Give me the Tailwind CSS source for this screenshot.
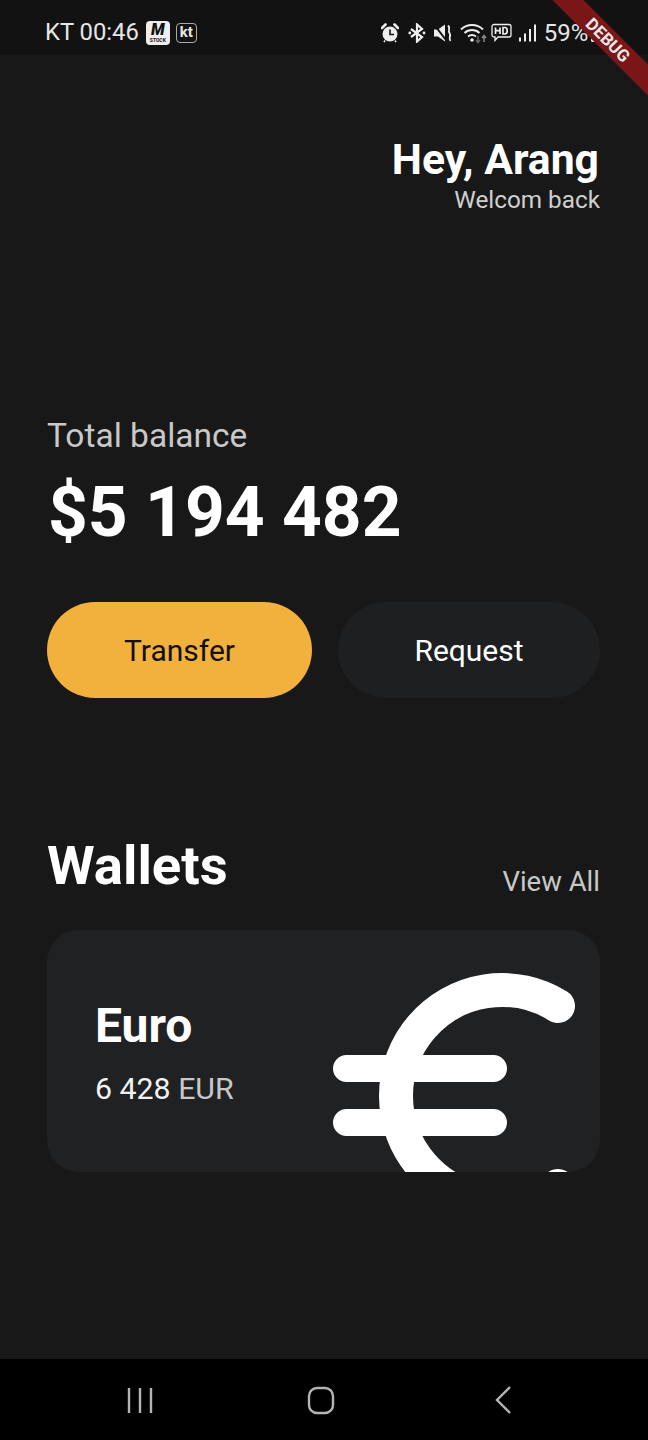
<!DOCTYPE html>
<html lang="en">
  <head>
    <meta charset="UTF-8" />
    <meta name="viewport" content="width=device-width, initial-scale=1.0" />
    <title>Wallet</title>
    <script src="https://cdn.jsdelivr.net/npm/@tailwindcss/browser@4"></script>
  </head>
  <body class="bg-[#181818] font-['Roboto',sans-serif]">
    <div class="relative w-[648px] h-[1440px] overflow-hidden flex flex-col">

      <!-- Status bar -->
      <div class="h-[55px] shrink-0 bg-[#121212] flex items-center pt-[10px] pl-[45px] text-[#e6e6e6]">
        <span class="text-[23.8px] leading-none">KT 00:46</span>
        <div class="ml-[7px] w-[24px] h-[24px] rounded-[4px] bg-[#eeeeee] flex flex-col items-center justify-center text-[#111]">
          <span class="text-[16px] leading-[14px] font-black italic">M</span>
          <span class="text-[5px] leading-[6px] font-bold">STOCK</span>
        </div>
        <div class="ml-[6px] w-[21px] h-[20px] rounded-[4px] border border-[#aaaaaa] flex items-center justify-center">
          <span class="text-[15px] leading-none font-bold">kt</span>
        </div>
        <div class="ml-[184px] flex items-center">
          <!-- alarm -->
          <svg width="18" height="20" viewBox="0 0 18 20">
            <circle cx="9" cy="11" r="7.5" fill="#eee"/>
            <path d="M9 6.5V11.5H13" fill="none" stroke="#121212" stroke-width="1.6"/>
            <path d="M1 5L4.5 1.5M17 5L13.5 1.5" stroke="#eee" stroke-width="2.6" stroke-linecap="round"/>
            <path d="M4 17.5L3 19M14 17.5L15 19" stroke="#eee" stroke-width="1.6"/>
          </svg>
          <!-- bluetooth -->
          <svg class="ml-[9px]" width="18" height="20" viewBox="0 0 18 20">
            <path d="M3 6L14 14L9 18.5V1.5L14 6L3 14" fill="none" stroke="#eee" stroke-width="2.2"/>
            <circle cx="1.8" cy="10" r="1.4" fill="#eee"/>
            <circle cx="16" cy="10" r="1.4" fill="#eee"/>
          </svg>
          <!-- muted speaker -->
          <svg class="ml-[8px]" width="19" height="20" viewBox="0 0 19 20">
            <path d="M0 6.5H4L11 1.5V18.5L4 13.5H0Z" fill="#eee"/>
            <path d="M0.5 2L12 17" stroke="#121212" stroke-width="2"/>
            <path d="M14 2.5C17 5 13.5 7 15.5 10C17.5 13 14 15 16.5 18" fill="none" stroke="#eee" stroke-width="1.8"/>
          </svg>
          <!-- wifi -->
          <svg class="ml-[7px]" width="27" height="22" viewBox="0 0 27 22">
            <path d="M1 7.5C7 1.5 17 1.5 23 7.5M4.5 11C8.5 7 15.5 7 19.5 11M8 14.5C10.5 12.5 13.5 12.5 16 14.5" fill="none" stroke="#eee" stroke-width="1.9"/>
            <circle cx="12" cy="18" r="1.8" fill="#eee"/>
            <path d="M18 14V20M16 18L18 20.5L20 18" fill="none" stroke="#666" stroke-width="1.5"/>
            <path d="M24 20V14M22 16L24 13.5L26 16" fill="none" stroke="#888" stroke-width="1.5"/>
          </svg>
          <!-- HD voice -->
          <svg class="ml-[4px]" width="21" height="20" viewBox="0 0 21 20">
            <path d="M3 1.5H18A2 2 0 0 1 20 3.5V12A2 2 0 0 1 18 14H7L4 17.5V14H3A2 2 0 0 1 1 12V3.5A2 2 0 0 1 3 1.5Z" fill="none" stroke="#eee" stroke-width="1.3"/>
            <path d="M4.5 4.5V11M9 4.5V11M4.5 7.7H9" stroke="#eee" stroke-width="1.7" fill="none"/>
            <path d="M12 4.5V11H13.8C17 11 17 4.5 13.8 4.5Z" stroke="#eee" stroke-width="1.7" fill="none"/>
          </svg>
          <!-- signal -->
          <svg class="ml-[7px]" width="17" height="18" viewBox="0 0 17 18">
            <rect x="0" y="13.5" width="2" height="4" fill="#eee"/>
            <rect x="5" y="9.5" width="2" height="8" fill="#eee"/>
            <rect x="10" y="5" width="2" height="12.5" fill="#eee"/>
            <rect x="15" y="0.5" width="2" height="17" fill="#eee"/>
          </svg>
          <span class="ml-[8px] text-[24px] leading-none">59%</span>
        </div>
        <!-- battery -->
        <svg class="absolute left-[591px] top-[32px]" width="13" height="10" viewBox="0 0 13 10">
          <rect width="13" height="10" rx="1.5" fill="#eee"/>
          <path d="M7.5 2L4.5 6H6.5L5.5 8.5L8.5 4.5H6.5Z" fill="#121212"/>
        </svg>
      </div>

      <!-- Debug banner -->
      <div class="absolute left-[528px] top-[29px] w-[160px] h-[22px] bg-[#7a1518] rotate-45 flex items-center justify-center">
        <span class="text-[17px] leading-none font-bold text-[#e8e8e8]">DEBUG</span>
      </div>

      <main class="flex-1 flex flex-col px-[47px]">
        <div class="mt-[81px] flex flex-col items-end">
          <h1 class="text-[42.7px] leading-[47px] font-bold text-white pr-[2px]">Hey, Arang</h1>
          <p class="mt-[2px] text-[24.3px] leading-[30px] text-[#cfcfcf] pr-[1px]">Welcom back</p>
        </div>

        <p class="mt-[202px] text-[33.5px] leading-[38px] text-[#c8c8c8]">Total balance</p>
        <p class="mt-[17px] ml-[1px] text-[69.5px] leading-[82px] font-bold text-white">$5 194 482</p>

        <div class="mt-[48px] flex gap-[26px]">
          <button class="w-[265px] h-[96px] rounded-[48px] bg-[#f2b13c] text-[30px] text-[#111111]">Transfer</button>
          <button class="w-[262px] h-[96px] rounded-[48px] bg-[#1e1f21] text-[30px] text-white">Request</button>
        </div>

        <div class="mt-[135px] flex items-end justify-between">
          <h2 class="text-[54.5px] leading-[64px] font-bold text-white">Wallets</h2>
          <span class="text-[27.5px] leading-[33px] text-[#c8c8c8] pr-[1px] -mb-[1px]">View All</span>
        </div>

        <div class="relative mt-[33px] w-[553px] h-[242px] rounded-[32px] bg-[#202123] overflow-hidden pl-[48px] pt-[69px]">
          <p class="text-[48px] leading-[53px] font-bold text-white">Euro</p>
          <p class="mt-[20px] text-[30.3px] leading-[34px] text-[#f2f2f2]">6 428 <span class="text-[#c8c8c8]">EUR</span></p>
          <svg class="absolute left-[0px] top-[0px]" width="553" height="242" viewBox="0 0 553 242">
            <path d="M511 76A106 106 0 1 0 511 256" fill="none" stroke="#fff" stroke-width="34" stroke-linecap="round"/>
            <path d="M299.5 138.5H446.5M299.5 192.5H446.5" fill="none" stroke="#fff" stroke-width="27" stroke-linecap="round"/>
          </svg>
        </div>
      </main>

      <!-- Navigation bar -->
      <div class="h-[81px] shrink-0 bg-black flex items-start justify-center">
        <svg width="648" height="81" viewBox="0 0 648 81">
          <path d="M129 29V54M140 29V54M151 29V54" stroke="#b5b5b5" stroke-width="2.4" fill="none"/>
          <rect x="309" y="29" width="24" height="25" rx="8" stroke="#b5b5b5" stroke-width="2.4" fill="none"/>
          <path d="M510 28L497 41L510 54" stroke="#b5b5b5" stroke-width="2.4" fill="none"/>
        </svg>
      </div>
    </div>
  </body>
</html>
